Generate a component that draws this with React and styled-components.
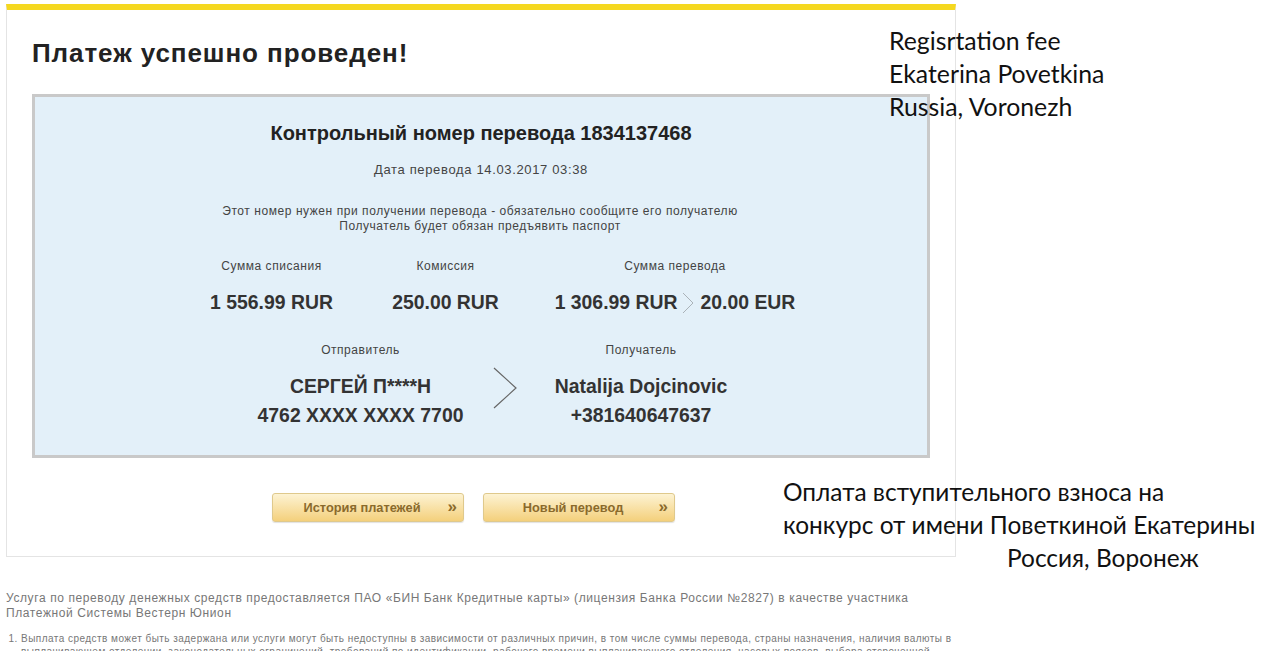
import styled, { createGlobalStyle } from "styled-components";

const GlobalStyle = createGlobalStyle`
  html, body {
    margin: 0;
    padding: 0;
    background: #fff;
    height: 651px;
    overflow: hidden;
  }
  body {
    font-family: "Liberation Sans", Arial, sans-serif;
    color: #333;
  }
`;

const Page = styled.div`
  position: relative;
  width: 1262px;
  height: 651px;
  overflow: hidden;
  padding: 4px 0 0 6px;
  box-sizing: border-box;
`;

const Card = styled.section`
  width: 950px;
  height: 553px;
  box-sizing: border-box;
  border: 1px solid #e4e4e4;
  border-top: 6px solid #f5d81f;
  padding: 0 25px;
`;

const Title = styled.h1`
  margin: 0;
  padding-top: 27px;
  height: 84px;
  box-sizing: border-box;
  font-size: 26px;
  line-height: 32px;
  font-weight: 700;
  letter-spacing: 0.93px;
  color: #222;
`;

const InfoBox = styled.div`
  width: 898px;
  height: 364px;
  box-sizing: border-box;
  border: 3px solid #c9c9c9;
  background: #e3f0f9;
  text-align: center;
  padding-top: 24px;
`;

const ControlNumber = styled.div`
  font-size: 20px;
  line-height: 24px;
  font-weight: 700;
  color: #222;
`;

const DateLine = styled.div`
  margin-top: 17px;
  font-size: 13px;
  line-height: 16px;
  letter-spacing: 0.65px;
  color: #444;
`;

const Note = styled.div`
  margin-top: 26px;
  padding-right: 2px;
  font-size: 12px;
  line-height: 15px;
  letter-spacing: 0.56px;
  color: #444;
`;

const SumGrid = styled.div`
  display: grid;
  grid-template-columns: 177px 171px 288px;
  padding-left: 148px;
  margin-top: 24px;
`;

const SumCell = styled.div`
  display: flex;
  flex-direction: column;
  align-items: center;
`;

const Label = styled.div`
  font-size: 12px;
  line-height: 16px;
  letter-spacing: 0.55px;
  color: #444;
`;

const Amount = styled.div`
  display: flex;
  align-items: center;
  margin-top: 16px;
  font-size: 19.4px;
  line-height: 24px;
  font-weight: 700;
  color: #333;
`;

const SmallArrow = styled.svg`
  width: 14px;
  height: 22px;
  margin: 2px 6px 0 3px;
`;

const Parties = styled.div`
  display: grid;
  grid-template-columns: 221px 60px 220px;
  padding-left: 215px;
  margin-top: 28px;
`;

const Party = styled.div`
  text-align: center;
`;

const PartyLine = styled.div`
  font-size: 19.4px;
  line-height: 29px;
  font-weight: 700;
  color: #333;
`;

const PartyLines = styled.div`
  margin-top: 14px;
`;

const BigArrow = styled.svg`
  width: 25px;
  height: 42px;
  margin: 25px 0 0 22px;
`;

const Actions = styled.div`
  display: flex;
  gap: 19px;
  padding-left: 240px;
  margin-top: 35px;
`;

const ActionButton = styled.button`
  position: relative;
  width: 192px;
  height: 29px;
  padding: 0 ${({ $shift }) => $shift}px 0 0;
  box-sizing: border-box;
  border: 1px solid #dfc98c;
  border-radius: 3px;
  background: linear-gradient(#fdf3d3, #f4d07c);
  box-shadow: 0 1px 1px rgba(0, 0, 0, 0.12);
  font-family: inherit;
  font-size: 12.8px;
  font-weight: 700;
  color: #8a6a2c;
  text-align: center;
`;

const Chevrons = styled.span`
  position: absolute;
  right: 6px;
  top: 2px;
  font-size: 17px;
  line-height: 22px;
  font-weight: 700;
`;

const Footer = styled.footer`
  margin: 34px 0 0 0;
  width: 952px;
  color: #777;
`;

const Provider = styled.p`
  margin: 0;
  font-size: 12px;
  line-height: 15px;
  letter-spacing: 0.6px;
`;

const Terms = styled.ol`
  margin: 11px 0 0;
  padding: 0 0 0 15px;
  font-size: 10px;
  line-height: 13px;
  letter-spacing: 0.463px;
`;

const Annotation = styled.div`
  position: absolute;
  left: ${({ $left }) => $left}px;
  top: ${({ $top }) => $top}px;
  font-family: Lato, "Open Sans", sans-serif;
  font-size: ${({ $size }) => $size}px;
  line-height: 33px;
  color: #111;
  white-space: nowrap;
`;

const AnnotationRow = styled.div`
  padding-left: ${({ $indent }) => $indent || 0}px;
`;

export default function App() {
  return (
    <Page>
      <GlobalStyle />
      <Card>
        <Title>Платеж успешно проведен!</Title>
        <InfoBox>
          <ControlNumber>Контрольный номер перевода 1834137468</ControlNumber>
          <DateLine>Дата перевода 14.03.2017 03:38</DateLine>
          <Note>
            Этот номер нужен при получении перевода - обязательно сообщите его получателю
            <br />
            Получатель будет обязан предъявить паспорт
          </Note>
          <SumGrid>
            <SumCell>
              <Label>Сумма списания</Label>
              <Amount>1 556.99 RUR</Amount>
            </SumCell>
            <SumCell>
              <Label>Комиссия</Label>
              <Amount>250.00 RUR</Amount>
            </SumCell>
            <SumCell>
              <Label>Сумма перевода</Label>
              <Amount>
                1 306.99 RUR
                <SmallArrow viewBox="0 0 14 22">
                  <path d="M2 1 L12 11 L2 21" fill="none" stroke="#aab2b8" strokeWidth="1" />
                </SmallArrow>
                20.00 EUR
              </Amount>
            </SumCell>
          </SumGrid>
          <Parties>
            <Party>
              <Label>Отправитель</Label>
              <PartyLines>
                <PartyLine>СЕРГЕЙ П****Н</PartyLine>
                <PartyLine>4762 XXXX XXXX 7700</PartyLine>
              </PartyLines>
            </Party>
            <BigArrow viewBox="0 0 25 42">
              <path d="M1 1 L23 21 L1 41" fill="none" stroke="#666" strokeWidth="1.2" />
            </BigArrow>
            <Party>
              <Label>Получатель</Label>
              <PartyLines>
                <PartyLine>Natalija Dojcinovic</PartyLine>
                <PartyLine>+381640647637</PartyLine>
              </PartyLines>
            </Party>
          </Parties>
        </InfoBox>
        <Actions>
          <ActionButton $shift={12}>
            История платежей
            <Chevrons>»</Chevrons>
          </ActionButton>
          <ActionButton $shift={12}>
            Новый перевод
            <Chevrons>»</Chevrons>
          </ActionButton>
        </Actions>
      </Card>
      <Footer>
        <Provider>
          Услуга по переводу денежных средств предоставляется ПАО «БИН Банк Кредитные карты» (лицензия Банка России №2827) в качестве участника Платежной Системы Вестерн Юнион
        </Provider>
        <Terms>
          <li>
            Выплата средств может быть задержана или услуги могут быть недоступны в зависимости от различных причин, в том числе суммы перевода, страны назначения, наличия валюты в выплачивающем отделении, законодательных ограничений, требований по идентификации, рабочего времени выплачивающего отделения, часовых поясов, выбора отсроченной
          </li>
        </Terms>
      </Footer>
      <Annotation $left={889} $top={24} $size={24.8}>
        <AnnotationRow>Regisrtation fee</AnnotationRow>
        <AnnotationRow>Ekaterina Povetkina</AnnotationRow>
        <AnnotationRow>Russia, Voronezh</AnnotationRow>
      </Annotation>
      <Annotation $left={783} $top={475} $size={24.45}>
        <AnnotationRow>Оплата вступительного взноса на</AnnotationRow>
        <AnnotationRow>конкурс от имени Поветкиной Екатерины</AnnotationRow>
        <AnnotationRow $indent={224}>Россия, Воронеж</AnnotationRow>
      </Annotation>
    </Page>
  );
}
